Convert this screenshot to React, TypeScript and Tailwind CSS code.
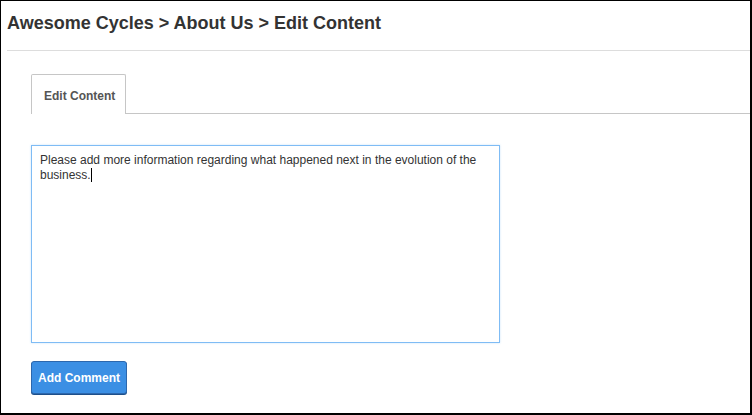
export default function App() {
	return (
		<div className="w-[752px] h-[415px] bg-white border-l border-t border-r-2 border-b-2 border-black font-['Liberation_Sans',Arial,sans-serif] text-[#333]">
			<header className="h-[50px] ml-[6px] border-b border-[#dddddd]">
				<h1 className="pt-[11px] text-[18px] leading-[22px] font-bold text-[#333]">
					Awesome Cycles &gt; About Us &gt; Edit Content
				</h1>
			</header>
			<main className="pl-[30px]">
				<nav className="mt-[23px] flex border-b border-[#c6c6c6]">
					<div className="w-[95px] h-[40px] -mb-px bg-white border border-b-0 border-[#c6c6c6] rounded-t-[2px] pl-[12px] pt-[14px] text-[12px] leading-[14px] font-bold text-[#555]">
						Edit Content
					</div>
				</nav>
				<div className="mt-[31px] w-[469px] h-[198px] border border-[#7fbcf5] shadow-[0_0_2px_rgba(102,175,233,0.35)] px-[8px] pt-[7px] text-[12px] leading-[15px] text-[#333]">
					Please add more information regarding what happened next in the evolution of the business.
					<span className="inline-block w-px h-[14px] bg-black align-[-3px]" />
				</div>
				<button className="mt-[18px] w-[96px] h-[33px] rounded-[3px] border border-[#2c67ad] bg-[#3b8fe4] shadow-[0_1px_0_#1d4f8a] text-[12px] font-bold text-white">
					Add Comment
				</button>
			</main>
		</div>
	);
}
